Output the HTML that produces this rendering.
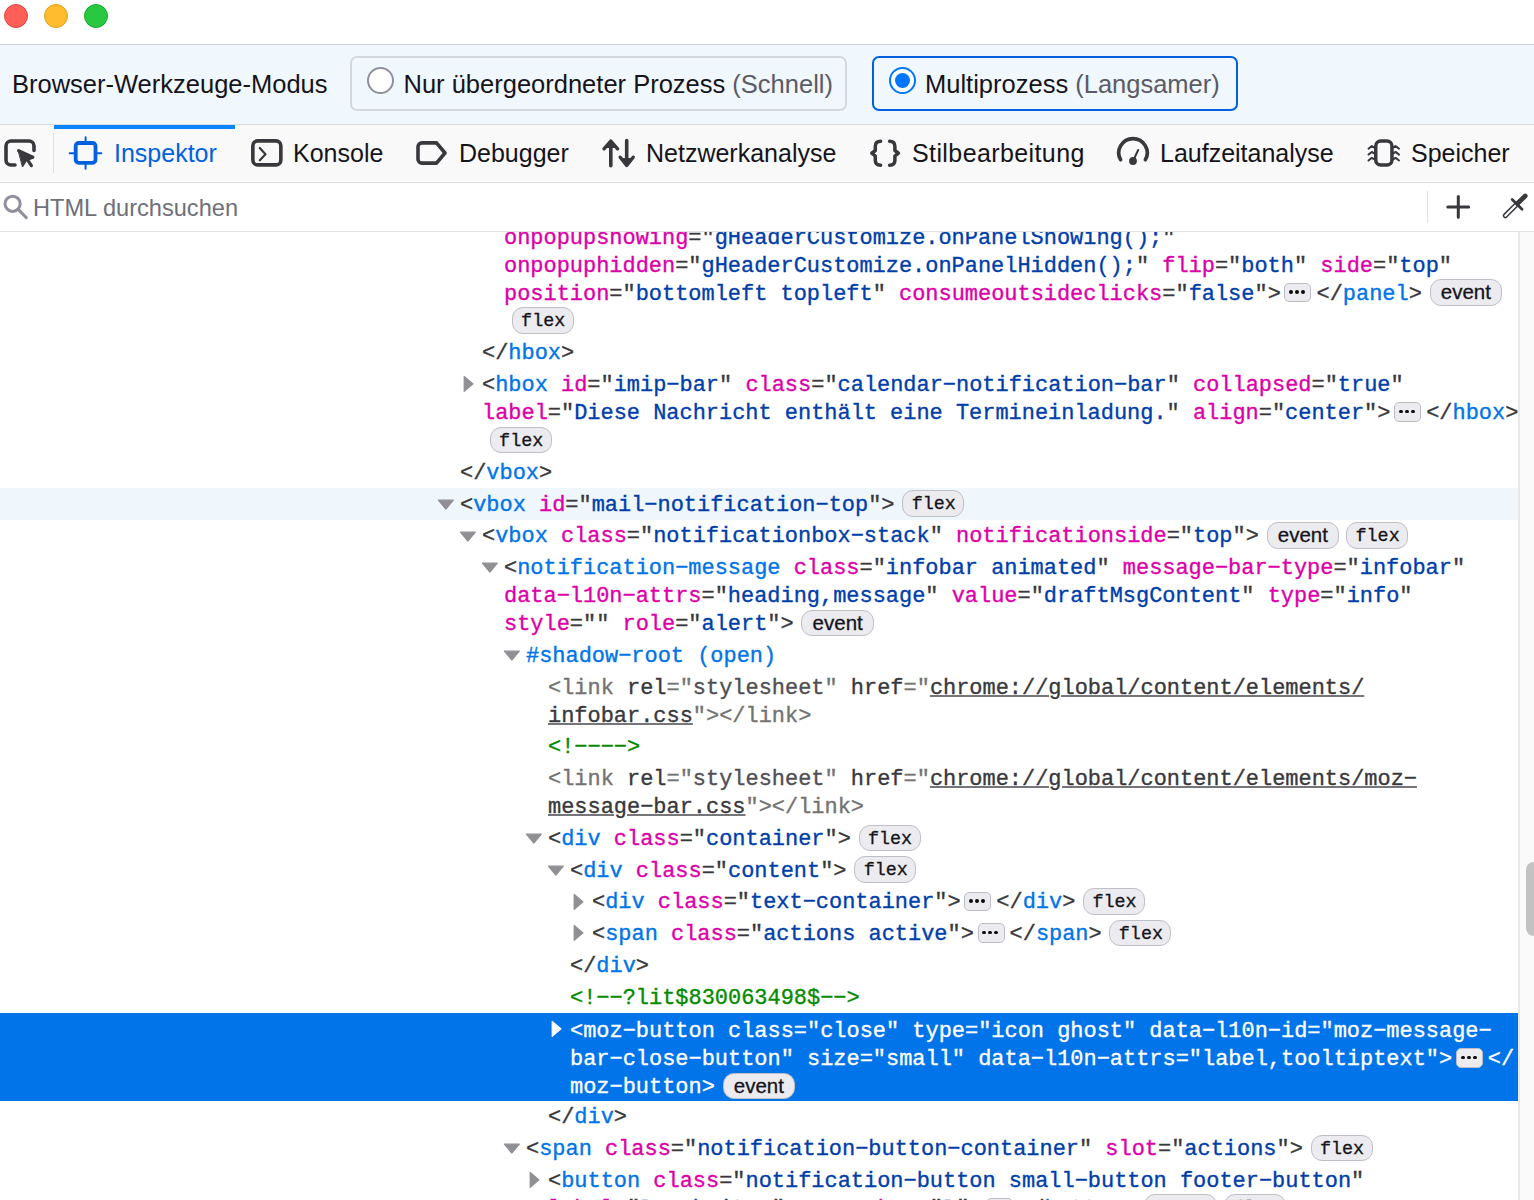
<!DOCTYPE html>
<html><head><meta charset="utf-8">
<style>
html,body{margin:0;padding:0;width:1534px;height:1200px;overflow:hidden;background:#fff;}
body{position:relative;font-family:"Liberation Sans",sans-serif;color:#15141a;}
.abs{position:absolute;}
#title{left:0;top:0;width:1534px;height:44px;background:#fff;}
.dot{position:absolute;top:4px;width:24px;height:24px;border-radius:50%;box-sizing:border-box;}
#modebar{left:0;top:44px;width:1534px;height:80px;background:#f0f7fd;border-top:1px solid #cdd3d9;border-bottom:1px solid #d6dce2;box-sizing:border-box;height:81px;}
.mtext{position:absolute;font-size:25.5px;white-space:pre;line-height:30px;}
.rbox{position:absolute;top:56px;height:55px;box-sizing:border-box;border:2px solid #d3d8dd;border-radius:7px;}
.radio{position:absolute;width:27px;height:27px;border-radius:50%;box-sizing:border-box;}
#tabbar{left:0;top:125px;width:1534px;height:58px;background:#f9f9f9;border-bottom:1px solid #e0e0e2;box-sizing:border-box;}
.tab{position:absolute;font-size:25px;white-space:pre;line-height:30px;top:138.1px;}
#search{left:0;top:183px;width:1534px;height:49px;background:#fff;border-bottom:1px solid #e0e0e2;box-sizing:border-box;}
#code{left:0;top:232px;width:1518px;height:968px;overflow:hidden;background:#fff;}
#track{left:1518px;top:232px;width:16px;height:968px;background:#fafafa;border-left:2px solid #e8e8e8;box-sizing:border-box;}
#thumb{left:1526px;top:862px;width:16px;height:74px;background:#c2c2c2;border-radius:8px;}

.row{position:absolute;left:0;width:1518px;}
.row.hover{background:#eff6fc;}
.row.sel{background:#0074e8;}
.ln{position:absolute;white-space:pre;font-family:"Liberation Mono",monospace;font-size:21.95px;line-height:28px;height:28px;color:#38383d;}
.ln span{position:relative;top:1.7px;}
.p,.q{color:#38383d;}
.t{color:#0074e8;}
.an{color:#dd00a9;}
.av{color:#003eaa;}
.c{color:#058b00;}
.gray .p,.gray .t,.gray .q{color:#737373;}
.gray .an,.gray .av{color:#38383d;}
.gray .av.v2{color:#4f4f55;}
.u{text-decoration:underline;text-underline-offset:1px;text-decoration-thickness:1.5px;text-decoration-color:#75757a;}
.sel .ln span{color:#fff;}
.sel .ln{margin-top:1.7px;}
.sel .tri{margin-top:0.8px;}
.ln span{-webkit-text-stroke:0.35px currentColor;}
.bd{display:inline-block;vertical-align:top;position:relative;top:0.5px;box-sizing:border-box;height:26.5px;border:1.7px solid #bfbfc8;border-radius:11px;background:#ebebf0;color:#15141a;font-weight:normal;text-align:center;margin-left:7.7px;-webkit-text-stroke:0.3px currentColor;}
.bd.flex{width:62px;font-family:"Liberation Mono",monospace;font-size:18.4px;line-height:27.6px;padding-left:1px;}
.bd.event{width:72.6px;font-family:"Liberation Sans",sans-serif;font-size:20.5px;line-height:23.5px;}
.bd.event + .bd{margin-left:7px;}
.dots{display:inline-block;vertical-align:top;position:relative;top:3.9px;box-sizing:border-box;width:27px;height:19.4px;border:1.6px solid #bcbcc6;border-radius:5px;background:#ebebf0;margin:0 5px 0 3.7px;}
.dots i{position:absolute;top:6.3px;width:3.8px;height:3.8px;border-radius:50%;background:#0c0c0d;}
.dots i:nth-child(1){left:3.9px;}.dots i:nth-child(2){left:9.9px;}.dots i:nth-child(3){left:15.9px;}
.tri{position:absolute;}
.tri path{fill:#8f8f94;stroke:#8f8f94;stroke-width:1.2;stroke-linejoin:round;}
.sel .tri path{fill:#fff;stroke:#fff;}
</style></head>
<body>
<div id="title" class="abs">
  <div class="dot" style="left:4px;background:#ff5f57;border:1px solid #e2463f;"></div>
  <div class="dot" style="left:44px;background:#febc2e;border:1px solid #e1a116;"></div>
  <div class="dot" style="left:84px;background:#28c840;border:1px solid #1aab29;"></div>
</div>
<div id="modebar" class="abs"></div>
<div class="mtext" style="left:12px;top:69px;">Browser-Werkzeuge-Modus</div>
<div class="rbox" style="left:350px;width:497px;"></div>
<div class="radio" style="left:367px;top:67px;background:#fff;border:2px solid #8f8f9d;"></div>
<div class="mtext" style="left:403.5px;top:69px;">Nur übergeordneter Prozess <span style="color:#5b5b66">(Schnell)</span></div>
<div class="rbox" style="left:872px;width:366px;border-color:#0061e0;"></div>
<div class="radio" style="left:889px;top:67px;background:#fff;border:2px solid #0075ff;"><div style="position:absolute;left:4px;top:4px;width:15px;height:15px;border-radius:50%;background:#0075ff;"></div></div>
<div class="mtext" style="left:925px;top:69px;">Multiprozess <span style="color:#5b5b66">(Langsamer)</span></div>

<div id="tabbar" class="abs"></div>
<div id="tabs">
<svg class="abs" style="left:0;top:132px" width="40" height="40" viewBox="0 0 40 40" fill="none" stroke="#38383d" stroke-width="3.6" stroke-linecap="round" stroke-linejoin="round"><path d="M15 33H11A5 5 0 0 1 6 28V14A5 5 0 0 1 11 9H29A5 5 0 0 1 34 14V18.5"/><path d="M18.6 18.6L32.8 25.3L27.2 27.3L31.4 33.6" stroke-width="3.2"/><path d="M18.3 18.2L33.5 25.5L27 28L22.7 34.7Z" fill="#38383d" stroke-width="1"/></svg>
<div class="abs" style="left:53px;top:133px;width:1px;height:40px;background:#e0e0e2"></div>
<div class="abs" style="left:54px;top:125px;width:181px;height:4px;background:#0a84ff"></div>
<svg class="abs" style="left:65px;top:132px" width="40" height="40" viewBox="0 0 40 40" fill="none" stroke="#0061e0" stroke-linecap="round"><rect x="10.7" y="11" width="19.8" height="19.8" rx="3" stroke-width="3.8"/><path d="M20.6 5.3V11M20.6 30.8V36.7M4.7 21.2H10.7M30.5 21.2H36.3" stroke-width="2"/></svg>
<div class="tab" style="left:114px;color:#0061e0">Inspektor</div>
<svg class="abs" style="left:245px;top:132px" width="40" height="40" viewBox="0 0 40 40" fill="none" stroke="#38383d" stroke-linecap="round" stroke-linejoin="round"><rect x="7.85" y="8.9" width="28" height="24" rx="5" stroke-width="3.6"/><path d="M14.8 16L20.5 22.2L14.8 28.3" stroke-width="2.2"/></svg>
<div class="tab" style="left:293px">Konsole</div>
<svg class="abs" style="left:412px;top:132px" width="40" height="40" viewBox="0 0 40 40" fill="none" stroke="#38383d" stroke-width="3.6" stroke-linejoin="round"><path d="M10 10.85H24.5L33 21L24.5 31.15H10A4 4 0 0 1 6 27.15V14.85A4 4 0 0 1 10 10.85Z"/></svg>
<div class="tab" style="left:459px">Debugger</div>
<svg class="abs" style="left:598px;top:132px" width="40" height="40" viewBox="0 0 40 40" fill="none" stroke="#38383d" stroke-linecap="round" stroke-linejoin="round"><path d="M12.8 10V33.7M28.7 8.5V32" stroke-width="3.6"/><path d="M6 16.8L12.8 9L19.6 16.8M22.2 25.2L28.7 33.5L35.2 25.2" stroke-width="3.4"/><path d="M8 15L12.8 9.5L17.6 15ZM24 27L28.7 33L33.4 27Z" fill="#38383d" stroke-width="2"/></svg>
<div class="tab" style="left:646px">Netzwerkanalyse</div>
<svg class="abs" style="left:865px;top:132px" width="40" height="40" viewBox="0 0 40 40" fill="none" stroke="#38383d" stroke-width="3.5" stroke-linecap="round" stroke-linejoin="round"><path d="M15.6 9.3C12 9.3 10.3 11 10.3 14.5V18.5L6.8 21.2L10.3 24V28.2C10.3 31.5 12 33.2 15.6 33.2"/><path d="M24.6 9.3C28.2 9.3 29.9 11 29.9 14.5V18.5L33.4 21.2L29.9 24V28.2C29.9 31.5 28.2 33.2 24.6 33.2"/></svg>
<div class="tab" style="left:912px;letter-spacing:0.4px">Stilbearbeitung</div>
<svg class="abs" style="left:1113px;top:132px" width="40" height="40" viewBox="0 0 40 40" fill="none" stroke="#38383d" stroke-linecap="round" stroke-linejoin="round"><path d="M7.6 27.7A14.2 14.2 0 1 1 32.4 27.7" stroke-width="3.7"/><path d="M20 29L25.2 18" stroke-width="2"/><circle cx="20" cy="29" r="3.9" fill="#38383d" stroke="none"/></svg>
<div class="tab" style="left:1160px">Laufzeitanalyse</div>
<svg class="abs" style="left:1363px;top:132px" width="40" height="40" viewBox="0 0 40 40" fill="none" stroke="#38383d" stroke-linecap="round" stroke-linejoin="round"><rect x="12.75" y="8.95" width="16.2" height="24" rx="5" stroke-width="3.5"/><path d="M5.5 16.7L8.8 14L11 15.4M5.5 22.6L8.8 19.9L11 21.3M5.5 28.5L8.8 25.8L11 27.2M36 16.7L32.6 14L30.5 15.4M36 22.6L32.6 19.9L30.5 21.3M36 28.5L32.6 25.8L30.5 27.2" stroke-width="2"/></svg>
<div class="tab" style="left:1411px">Speicher</div>
</div>
<div id="search" class="abs"></div>
<div id="searchc">
<svg class="abs" style="left:0;top:183px" width="40" height="48" viewBox="0 0 40 48" fill="none" stroke="#8f8f9d" stroke-linecap="round"><circle cx="12.6" cy="20.8" r="7.6" stroke-width="3"/><path d="M18.2 26.4L26.3 34.6" stroke-width="3"/></svg>
<div class="abs" style="left:33px;top:192.5px;font-size:23.6px;line-height:30px;color:#6f6f7a;white-space:pre">HTML durchsuchen</div>
<div class="abs" style="left:1427px;top:191px;width:1px;height:32px;background:#e0e0e2"></div>
<svg class="abs" style="left:1438px;top:187px" width="40" height="40" viewBox="0 0 40 40" fill="none" stroke="#38383d" stroke-width="3" stroke-linecap="round"><path d="M20.3 9.6V30.2M9.8 19.9H30.7"/></svg>
<svg class="abs" style="left:1496px;top:187px" width="38" height="40" viewBox="0 0 38 40" fill="none" stroke-linecap="round" stroke-linejoin="round"><path d="M9.3 28.7L21 17" stroke="#38383d" stroke-width="5.2"/><path d="M9.3 28.7L21 17" stroke="#fff" stroke-width="2.1"/><path d="M16.2 12.6L26 22.2" stroke="#38383d" stroke-width="2.8"/><path d="M21.5 16.5L29.2 9" stroke="#38383d" stroke-width="4.8"/></svg>
</div>


<div id="code" class="abs">

<div class="row" style="top:-11.00px;height:115.75px"><div class="ln" style="left:504px;top:1.88px"><span class="an">onpopupshowing</span><span class="p">=</span><span class="q">"</span><span class="av">gHeaderCustomize.onPanelShowing();</span><span class="q">"</span></div><div class="ln" style="left:504px;top:29.88px"><span class="an">onpopuphidden</span><span class="p">=</span><span class="q">"</span><span class="av">gHeaderCustomize.onPanelHidden();</span><span class="q">"</span> <span class="an">flip</span><span class="p">=</span><span class="q">"</span><span class="av">both</span><span class="q">"</span> <span class="an">side</span><span class="p">=</span><span class="q">"</span><span class="av">top</span><span class="q">"</span></div><div class="ln" style="left:504px;top:57.88px"><span class="an">position</span><span class="p">=</span><span class="q">"</span><span class="av">bottomleft topleft</span><span class="q">"</span> <span class="an">consumeoutsideclicks</span><span class="p">=</span><span class="q">"</span><span class="av">false</span><span class="q">"</span><span class="p">&gt;</span><b class="dots"><i></i><i></i><i></i></b><span class="p">&lt;/</span><span class="t">panel</span><span class="p">&gt;</span><b class="bd event">event</b></div><div class="ln" style="left:504px;top:85.88px"><b class="bd flex">flex</b></div></div>
<div class="row" style="top:104.75px;height:31.75px"><div class="ln" style="left:482px;top:1.88px"><span class="p">&lt;/</span><span class="t">hbox</span><span class="p">&gt;</span></div></div>
<div class="row" style="top:136.50px;height:87.75px"><svg class="tri" style="left:463.00px;top:6.88px" width="12" height="18"><path d="M1.2 1.4L10 8.85L1.2 16.3Z"/></svg><div class="ln" style="left:482px;top:1.88px"><span class="p">&lt;</span><span class="t">hbox</span> <span class="an">id</span><span class="p">=</span><span class="q">"</span><span class="av">imip−bar</span><span class="q">"</span> <span class="an">class</span><span class="p">=</span><span class="q">"</span><span class="av">calendar−notification−bar</span><span class="q">"</span> <span class="an">collapsed</span><span class="p">=</span><span class="q">"</span><span class="av">true</span><span class="q">"</span></div><div class="ln" style="left:482px;top:29.88px"><span class="an">label</span><span class="p">=</span><span class="q">"</span><span class="av">Diese Nachricht enthält eine Termineinladung.</span><span class="q">"</span> <span class="an">align</span><span class="p">=</span><span class="q">"</span><span class="av">center</span><span class="q">"</span><span class="p">&gt;</span><b class="dots"><i></i><i></i><i></i></b><span class="p">&lt;/</span><span class="t">hbox</span><span class="p">&gt;</span></div><div class="ln" style="left:482px;top:57.88px"><b class="bd flex">flex</b></div></div>
<div class="row" style="top:224.25px;height:31.75px"><div class="ln" style="left:460px;top:1.88px"><span class="p">&lt;/</span><span class="t">vbox</span><span class="p">&gt;</span></div></div>
<div class="row hover" style="top:256.00px;height:31.75px"><svg class="tri" style="left:437.00px;top:10.78px" width="18" height="12"><path d="M1.4 1.2L16.3 1.2L8.85 10Z"/></svg><div class="ln" style="left:460px;top:1.88px"><span class="p">&lt;</span><span class="t">vbox</span> <span class="an">id</span><span class="p">=</span><span class="q">"</span><span class="av">mail−notification−top</span><span class="q">"</span><span class="p">&gt;</span><b class="bd flex">flex</b></div></div>
<div class="row" style="top:287.75px;height:31.75px"><svg class="tri" style="left:459.00px;top:10.78px" width="18" height="12"><path d="M1.4 1.2L16.3 1.2L8.85 10Z"/></svg><div class="ln" style="left:482px;top:1.88px"><span class="p">&lt;</span><span class="t">vbox</span> <span class="an">class</span><span class="p">=</span><span class="q">"</span><span class="av">notificationbox−stack</span><span class="q">"</span> <span class="an">notificationside</span><span class="p">=</span><span class="q">"</span><span class="av">top</span><span class="q">"</span><span class="p">&gt;</span><b class="bd event">event</b><b class="bd flex">flex</b></div></div>
<div class="row" style="top:319.50px;height:87.75px"><svg class="tri" style="left:481.00px;top:10.78px" width="18" height="12"><path d="M1.4 1.2L16.3 1.2L8.85 10Z"/></svg><div class="ln" style="left:504px;top:1.88px"><span class="p">&lt;</span><span class="t">notification−message</span> <span class="an">class</span><span class="p">=</span><span class="q">"</span><span class="av">infobar animated</span><span class="q">"</span> <span class="an">message−bar−type</span><span class="p">=</span><span class="q">"</span><span class="av">infobar</span><span class="q">"</span></div><div class="ln" style="left:504px;top:29.88px"><span class="an">data−l10n−attrs</span><span class="p">=</span><span class="q">"</span><span class="av">heading,message</span><span class="q">"</span> <span class="an">value</span><span class="p">=</span><span class="q">"</span><span class="av">draftMsgContent</span><span class="q">"</span> <span class="an">type</span><span class="p">=</span><span class="q">"</span><span class="av">info</span><span class="q">"</span></div><div class="ln" style="left:504px;top:57.88px"><span class="an">style</span><span class="p">=</span><span class="q">"</span><span class="q">"</span> <span class="an">role</span><span class="p">=</span><span class="q">"</span><span class="av">alert</span><span class="q">"</span><span class="p">&gt;</span><b class="bd event">event</b></div></div>
<div class="row" style="top:407.25px;height:31.75px"><svg class="tri" style="left:503.00px;top:10.78px" width="18" height="12"><path d="M1.4 1.2L16.3 1.2L8.85 10Z"/></svg><div class="ln" style="left:526px;top:1.88px"><span class="t">#shadow−root (open)</span></div></div>
<div class="row gray" style="top:439.00px;height:59.75px"><div class="ln" style="left:548px;top:1.88px"><span class="p">&lt;</span><span class="t">link</span> <span class="an">rel</span><span class="p">=</span><span class="q">"</span><span class="av v2">stylesheet</span><span class="q">"</span> <span class="an">href</span><span class="p">=</span><span class="q">"</span><span class="av u">chrome://global/content/elements/</span></div><div class="ln" style="left:548px;top:29.88px"><span class="av u">infobar.css</span><span class="q">"</span><span class="p">&gt;</span><span class="p">&lt;/</span><span class="t">link</span><span class="p">&gt;</span></div></div>
<div class="row" style="top:498.75px;height:31.75px"><div class="ln" style="left:548px;top:1.88px"><span class="c">&lt;!−−−−&gt;</span></div></div>
<div class="row gray" style="top:530.50px;height:59.75px"><div class="ln" style="left:548px;top:1.88px"><span class="p">&lt;</span><span class="t">link</span> <span class="an">rel</span><span class="p">=</span><span class="q">"</span><span class="av v2">stylesheet</span><span class="q">"</span> <span class="an">href</span><span class="p">=</span><span class="q">"</span><span class="av u">chrome://global/content/elements/moz−</span></div><div class="ln" style="left:548px;top:29.88px"><span class="av u">message−bar.css</span><span class="q">"</span><span class="p">&gt;</span><span class="p">&lt;/</span><span class="t">link</span><span class="p">&gt;</span></div></div>
<div class="row" style="top:590.25px;height:31.75px"><svg class="tri" style="left:525.00px;top:10.78px" width="18" height="12"><path d="M1.4 1.2L16.3 1.2L8.85 10Z"/></svg><div class="ln" style="left:548px;top:1.88px"><span class="p">&lt;</span><span class="t">div</span> <span class="an">class</span><span class="p">=</span><span class="q">"</span><span class="av">container</span><span class="q">"</span><span class="p">&gt;</span><b class="bd flex">flex</b></div></div>
<div class="row" style="top:622.00px;height:31.75px"><svg class="tri" style="left:547.00px;top:10.78px" width="18" height="12"><path d="M1.4 1.2L16.3 1.2L8.85 10Z"/></svg><div class="ln" style="left:570px;top:1.88px"><span class="p">&lt;</span><span class="t">div</span> <span class="an">class</span><span class="p">=</span><span class="q">"</span><span class="av">content</span><span class="q">"</span><span class="p">&gt;</span><b class="bd flex">flex</b></div></div>
<div class="row" style="top:653.75px;height:31.75px"><svg class="tri" style="left:573.00px;top:6.88px" width="12" height="18"><path d="M1.2 1.4L10 8.85L1.2 16.3Z"/></svg><div class="ln" style="left:592px;top:1.88px"><span class="p">&lt;</span><span class="t">div</span> <span class="an">class</span><span class="p">=</span><span class="q">"</span><span class="av">text−container</span><span class="q">"</span><span class="p">&gt;</span><b class="dots"><i></i><i></i><i></i></b><span class="p">&lt;/</span><span class="t">div</span><span class="p">&gt;</span><b class="bd flex">flex</b></div></div>
<div class="row" style="top:685.50px;height:31.75px"><svg class="tri" style="left:573.00px;top:6.88px" width="12" height="18"><path d="M1.2 1.4L10 8.85L1.2 16.3Z"/></svg><div class="ln" style="left:592px;top:1.88px"><span class="p">&lt;</span><span class="t">span</span> <span class="an">class</span><span class="p">=</span><span class="q">"</span><span class="av">actions active</span><span class="q">"</span><span class="p">&gt;</span><b class="dots"><i></i><i></i><i></i></b><span class="p">&lt;/</span><span class="t">span</span><span class="p">&gt;</span><b class="bd flex">flex</b></div></div>
<div class="row" style="top:717.25px;height:31.75px"><div class="ln" style="left:570px;top:1.88px"><span class="p">&lt;/</span><span class="t">div</span><span class="p">&gt;</span></div></div>
<div class="row" style="top:749.00px;height:31.75px"><div class="ln" style="left:570px;top:1.88px"><span class="c">&lt;!−−?lit$830063498$−−&gt;</span></div></div>
<div class="row sel" style="top:780.75px;height:87.75px"><svg class="tri" style="left:551.00px;top:6.88px" width="12" height="18"><path d="M1.2 1.4L10 8.85L1.2 16.3Z"/></svg><div class="ln" style="left:570px;top:1.88px"><span class="p">&lt;</span><span class="t">moz−button</span> <span class="an">class</span><span class="p">=</span><span class="q">"</span><span class="av">close</span><span class="q">"</span> <span class="an">type</span><span class="p">=</span><span class="q">"</span><span class="av">icon ghost</span><span class="q">"</span> <span class="an">data−l10n−id</span><span class="p">=</span><span class="q">"</span><span class="av">moz−message−</span></div><div class="ln" style="left:570px;top:29.88px"><span class="av">bar−close−button</span><span class="q">"</span> <span class="an">size</span><span class="p">=</span><span class="q">"</span><span class="av">small</span><span class="q">"</span> <span class="an">data−l10n−attrs</span><span class="p">=</span><span class="q">"</span><span class="av">label,tooltiptext</span><span class="q">"</span><span class="p">&gt;</span><b class="dots"><i></i><i></i><i></i></b><span class="p">&lt;/</span></div><div class="ln" style="left:570px;top:57.88px"><span class="an">moz−button</span><span class="p">&gt;</span><b class="bd event">event</b></div></div>
<div class="row" style="top:868.50px;height:31.75px"><div class="ln" style="left:548px;top:1.88px"><span class="p">&lt;/</span><span class="t">div</span><span class="p">&gt;</span></div></div>
<div class="row" style="top:900.25px;height:31.75px"><svg class="tri" style="left:503.00px;top:10.78px" width="18" height="12"><path d="M1.4 1.2L16.3 1.2L8.85 10Z"/></svg><div class="ln" style="left:526px;top:1.88px"><span class="p">&lt;</span><span class="t">span</span> <span class="an">class</span><span class="p">=</span><span class="q">"</span><span class="av">notification−button−container</span><span class="q">"</span> <span class="an">slot</span><span class="p">=</span><span class="q">"</span><span class="av">actions</span><span class="q">"</span><span class="p">&gt;</span><b class="bd flex">flex</b></div></div>
<div class="row" style="top:932.00px;height:59.75px"><svg class="tri" style="left:529.00px;top:6.88px" width="12" height="18"><path d="M1.2 1.4L10 8.85L1.2 16.3Z"/></svg><div class="ln" style="left:548px;top:1.88px"><span class="p">&lt;</span><span class="t">button</span> <span class="an">class</span><span class="p">=</span><span class="q">"</span><span class="av">notification−button small−button footer−button</span><span class="q">"</span></div><div class="ln" style="left:548px;top:29.88px"><span class="an">label</span><span class="p">=</span><span class="q">"</span><span class="av">Bearbeiten</span><span class="q">"</span> <span class="an">accesskey</span><span class="p">=</span><span class="q">"</span><span class="av">B</span><span class="q">"</span><span class="p">&gt;</span><b class="dots"><i></i><i></i><i></i></b><span class="p">&lt;/</span><span class="t">button</span><span class="p">&gt;</span><b class="bd event">event</b><b class="bd flex">flex</b></div></div>
</div>
<div id="track" class="abs"></div>
<div id="thumb" class="abs"></div>
</body></html>
